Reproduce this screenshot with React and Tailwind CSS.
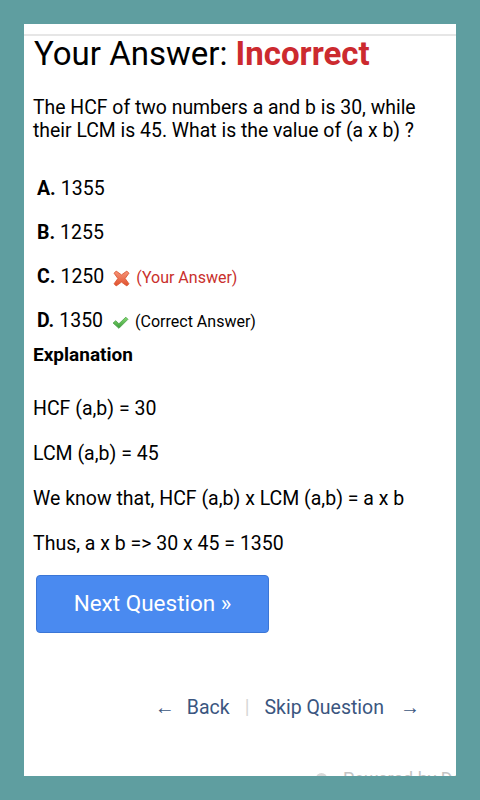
import React from "react";

function CrossIcon() {
  return (
    <svg width="17" height="17" viewBox="0 0 16 16" className="inline-block">
      <defs>
        <linearGradient id="xg" x1="0" y1="0" x2="0" y2="1">
          <stop offset="0" stopColor="#f7967a" />
          <stop offset="1" stopColor="#e0502c" />
        </linearGradient>
      </defs>
      <path
        d="M3 1 L8 4.6 L13 1 L15 3 L11.4 8 L15 13 L13 15 L8 11.4 L3 15 L1 13 L4.6 8 L1 3 Z"
        fill="url(#xg)"
        stroke="#d9542f"
        strokeWidth="0.8"
        strokeLinejoin="round"
      />
    </svg>
  );
}

function CheckIcon() {
  return (
    <svg width="17" height="17" viewBox="0 0 16 16" className="inline-block">
      <defs>
        <linearGradient id="cg" x1="0" y1="0" x2="0" y2="1">
          <stop offset="0" stopColor="#86dc70" />
          <stop offset="1" stopColor="#3a9a3a" />
        </linearGradient>
      </defs>
      <path
        d="M1 8.5 L3.5 6.3 L6.5 9.2 L13 3 L15 5 L6.5 13.5 Z"
        fill="url(#cg)"
        stroke="#3f9a3f"
        strokeWidth="0.7"
        strokeLinejoin="round"
      />
    </svg>
  );
}

export default function App() {
  const font = { fontFamily: "Roboto, 'Noto Sans', sans-serif" };
  return (
    <div className="w-[480px] h-[800px] bg-[#5f9ea0] p-6" style={font}>
      <div className="bg-white h-full overflow-hidden pt-[10px]">
        <div className="border-t-2 border-[#e6e6e6] pl-[9px] text-black">
          <h1 className="text-[33px] leading-[36px] pl-px whitespace-nowrap">
            Your Answer: <span className="font-bold text-[#cc2a2f]">Incorrect</span>
          </h1>
          <p className="mt-6 text-[19.4px] leading-[23px] pr-3">
            The HCF of two numbers a and b is 30, while their LCM is 45. What is the value of (a x b) ?
          </p>
          <div className="mt-[25px] text-[19.5px] pl-1">
            <div className="h-[44px] flex items-center">
              <span className="font-bold">A.</span>
              <span className="ml-[5px]">1355</span>
            </div>
            <div className="h-[44px] flex items-center">
              <span className="font-bold">B.</span>
              <span className="ml-[5px]">1255</span>
            </div>
            <div className="h-[44px] flex items-center">
              <span className="font-bold">C.</span>
              <span className="ml-[5px]">1250</span>
              <span className="ml-[9px] flex items-center mt-[2px]"><CrossIcon /></span>
              <span className="ml-[6px] text-[16px] text-[#c9302c] mt-[2px]">(Your Answer)</span>
            </div>
            <div className="h-[44px] flex items-center">
              <span className="font-bold">D.</span>
              <span className="ml-[5px]">1350</span>
              <span className="ml-[9px] flex items-center mt-[2px]"><CheckIcon /></span>
              <span className="ml-[6px] text-[16px] text-black mt-[2px]">(Correct Answer)</span>
            </div>
          </div>
          <div className="text-[19px] leading-[24px] font-bold">Explanation</div>
          <div className="mt-[19px] text-[19.5px]">
            <div className="h-[45px] flex items-center">HCF (a,b) = 30</div>
            <div className="h-[45px] flex items-center">LCM (a,b) = 45</div>
            <div className="h-[45px] flex items-center">We know that, HCF (a,b) x LCM (a,b) = a x b</div>
            <div className="h-[45px] flex items-center">Thus, a x b =&gt; 30 x 45 = 1350</div>
          </div>
          <div className="mt-[9px] ml-[3px]">
            <button className="w-[233px] h-[58px] rounded-[4px] bg-[#4a8af0] border border-[#3b76d6] text-white text-[22.5px] flex items-center justify-center">
              Next Question »
            </button>
          </div>
          <div className="mt-[60px] h-[30px] flex items-center justify-end pr-[36px] text-[19.5px] text-[#3b5680]">
            <span className="text-[20px] leading-none -mt-[2px]">←</span>
            <span className="ml-[12px]">Back</span>
            <span className="ml-[15px] text-[#d6d6d6]">|</span>
            <span className="ml-[15px]">Skip Question</span>
            <span className="ml-[16px] text-[20px] leading-none -mt-[2px]">→</span>
          </div>
          <div className="mt-[42px] flex items-center pl-[281px] text-[18px] text-[#c4c4c4] whitespace-nowrap">
            <svg width="15" height="15" viewBox="0 0 16 16" className="shrink-0">
              <circle cx="8" cy="8" r="6" fill="#d8d8d8" />
            </svg>
            <span className="ml-[14px]">Powered by DexterApps</span>
          </div>
        </div>
      </div>
    </div>
  );
}
